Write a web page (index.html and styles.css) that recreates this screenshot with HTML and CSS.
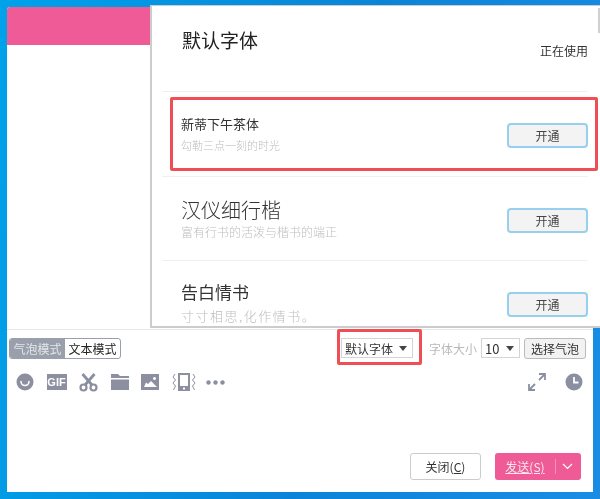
FILE: index.html
```html
<!DOCTYPE html>
<html lang="zh-CN">
<head>
    <meta charset="UTF-8">
    <title>默认字体</title>
    <link rel="stylesheet" href="styles.css">
</head>
<body>
    <div class="desktop">
        <div class="chat-window">
            <div class="chat-head"></div>
            <div class="chat-log"></div>

            <div class="format-bar">
                <div class="mode-toggle">
                    <span class="mode active">气泡模式</span>
                    <span class="mode">文本模式</span>
                </div>
                <div class="format-right">
                    <div class="dropdown font-pick">默认字体<i class="caret"></i></div>
                    <span class="size-label">字体大小</span>
                    <div class="dropdown size-pick">10<i class="caret"></i></div>
                    <button class="bubble-btn">选择气泡</button>
                </div>
            </div>

            <div class="tool-bar">
                <div class="tools-left">
                    <svg width="18" height="18" viewBox="0 0 18 18"><circle cx="9" cy="9" r="8.5" fill="#8b8fa0"/><path d="M5 8.5a4 4 0 0 0 8 0" fill="none" stroke="#fff" stroke-width="1.6" stroke-linecap="round"/></svg>
                    <span class="gif-icon">GIF</span>
                    <svg width="19" height="19" viewBox="0 0 19 19"><path d="M3.5 1l9.500 11M15.500 1l-9.500 11" stroke="#8b8fa0" stroke-width="2.800" fill="none"/><circle cx="4.500" cy="14.500" r="3" fill="none" stroke="#8b8fa0" stroke-width="2.200"/><circle cx="14.500" cy="14.500" r="3" fill="none" stroke="#8b8fa0" stroke-width="2.200"/></svg>
                    <svg width="18" height="16" viewBox="0 0 18 16"><path d="M0 0h7l2 2h9v2H0zM0 5.500h18V16H0z" fill="#8b8fa0"/></svg>
                    <svg width="18" height="16" viewBox="0 0 18 16"><path fill-rule="evenodd" d="M0 0h18v16H0zM3 13h13L10 7l-3 3-2-1.500zM13.500 3a1.500 1.500 0 1 0 .01 0z" fill="#8b8fa0"/></svg>
                    <svg width="24" height="18" viewBox="0 0 24 18"><path fill-rule="evenodd" d="M6 0h12v18H6zM8 2v11h8V2zM11 14.500v2h2v-2z" fill="#8b8fa0"/><path d="M3 1L1 4l2.500 3L1 10l2.500 3L1.500 17M21 1l2 3-2.500 3L23 10l-2.500 3 2 4" fill="none" stroke="#8b8fa0"/></svg>
                    <svg class="dots" width="19" height="5" viewBox="0 0 19 5"><circle cx="2.500" cy="2.500" r="2.200" fill="#8b8fa0"/><circle cx="9.500" cy="2.500" r="2.200" fill="#8b8fa0"/><circle cx="16.500" cy="2.500" r="2.200" fill="#8b8fa0"/></svg>
                </div>
                <div class="tools-right">
                    <svg width="18" height="18" viewBox="0 0 18 18"><path d="M11 1h6v6M17 1l-6 6M7 17H1v-6M1 17l6-6" fill="none" stroke="#8b8fa0" stroke-width="1.800"/></svg>
                    <svg width="18" height="18" viewBox="0 0 18 18"><circle cx="9" cy="9" r="8.500" fill="#8b8fa0"/><path d="M9 4v5.500h4.500" fill="none" stroke="#fff" stroke-width="1.800"/></svg>
                </div>
            </div>

            <div class="send-bar">
                <button class="close-btn">关闭(<u>C</u>)</button>
                <div class="send-btn">
                    <span class="send-label"><u>发送(S)</u></span>
                    <svg width="11" height="7" viewBox="0 0 11 7"><path d="M1 1l4.500 4.500L10 1" fill="none" stroke="#fff" stroke-width="1.200"/></svg>
                </div>
            </div>
        </div>

        <div class="font-panel">
            <div class="panel-head">
                <h1>默认字体</h1>
                <span class="in-use">正在使用</span>
            </div>
            <div class="font-row">
                <div>
                    <div class="font-name name-a">新蒂下午茶体</div>
                    <div class="font-desc desc-a">勾勒三点一刻的时光</div>
                </div>
                <button class="open-btn">开通</button>
            </div>
            <div class="font-row">
                <div>
                    <div class="font-name name-b">汉仪细行楷</div>
                    <div class="font-desc desc-b">富有行书的活泼与楷书的端正</div>
                </div>
                <button class="open-btn">开通</button>
            </div>
            <div class="font-row">
                <div>
                    <div class="font-name name-c">告白情书</div>
                    <div class="font-desc desc-c">寸寸相思,化作情书。</div>
                </div>
                <button class="open-btn">开通</button>
            </div>
            <div class="scroll-thumb"></div>
        </div>

        <div class="mark mark-row"></div>
        <div class="mark mark-font"></div>
    </div>
</body>
</html>
```

FILE: styles.css
```css
* {
    box-sizing: border-box;
}

body {
    margin: 0;
    font-family: "Noto Sans CJK SC", "Liberation Sans", sans-serif;
    color: #333;
}

button {
    font-family: inherit;
    padding: 0;
}

.desktop {
    position: relative;
    width: 600px;
    height: 499px;
    overflow: hidden;
    background: linear-gradient(100deg, #00a2ea 0%, #0a84d8 55%, #1a8ce4 100%);
    filter: blur(0.35px);
}

/* chat window */
.chat-window {
    position: absolute;
    left: 7px;
    top: 7px;
    width: 586px;
    height: 485px;
    display: flex;
    flex-direction: column;
    background: #fff;
    border-radius: 3px 3px 0 0;
    overflow: hidden;
}

.chat-head {
    height: 38px;
    background: #ee5b96;
}

.chat-log {
    height: 285px;
    border-bottom: 1px solid #e8e8e8;
}

.format-bar {
    display: flex;
    justify-content: space-between;
    align-items: center;
    height: 34px;
    padding: 0 7px 0 2px;
    margin-top: 1px;
}

.mode-toggle {
    display: flex;
    width: 112px;
    height: 21px;
    border: 1px solid #9aa0ab;
    border-radius: 3px;
    overflow: hidden;
    font-size: 12px;
    line-height: 19px;
}

.mode {
    flex: 1;
    text-align: center;
    color: #222;
}

.mode.active {
    background: #9aa0ab;
    color: #e4e6ea;
}

.format-right {
    display: flex;
    align-items: center;
}

.dropdown {
    display: flex;
    align-items: center;
    justify-content: space-between;
    height: 20px;
    padding: 0 5px 0 3px;
    border: 1px solid #d4d4d4;
    font-size: 12px;
    color: #333;
}

.font-pick {
    width: 72px;
}

.size-pick {
    width: 39px;
    margin-right: 4px;
    font-size: 13px;
}

.caret {
    width: 0;
    height: 0;
    border-left: 4.5px solid transparent;
    border-right: 4.5px solid transparent;
    border-top: 5px solid #444;
}

.size-label {
    margin: 0 4px 0 16px;
    font-size: 12px;
    color: #b9b9b9;
}

.bubble-btn {
    width: 62px;
    height: 21px;
    border: 1px solid #bbb;
    border-radius: 3px;
    background: #f2f2f2;
    font-size: 12px;
    color: #333;
}

.tool-bar {
    display: flex;
    justify-content: space-between;
    align-items: center;
    height: 34px;
    padding: 0 10px 0 9px;
}

.tools-left {
    display: flex;
    align-items: center;
    gap: 12.5px;
}

.tools-right {
    display: flex;
    align-items: center;
    gap: 19px;
}

.gif-icon {
    width: 20px;
    height: 16px;
    background: #8b8fa0;
    color: #fff;
    font-family: "Liberation Sans", sans-serif;
    font-size: 11px;
    font-weight: bold;
    line-height: 16px;
    text-align: center;
}

.dots {
    margin-left: -2px;
}

.send-bar {
    display: flex;
    justify-content: flex-end;
    gap: 14px;
    padding-right: 12px;
    margin-top: 54px;
}

.close-btn {
    width: 71px;
    height: 27px;
    border: 1px solid #ccc;
    border-radius: 3px;
    background: #fff;
    font-size: 12px;
    color: #333;
}

.send-btn {
    display: flex;
    align-items: center;
    width: 86px;
    height: 27px;
    border-radius: 3px;
    background: #ee5b96;
    color: #fde6ef;
    font-size: 12px;
}

.send-label {
    width: 61px;
    height: 15px;
    line-height: 15px;
    text-align: center;
    border-right: 1px solid #f48fb8;
    margin-right: 6px;
}

/* font list, sits over the chat window */
.font-panel {
    position: absolute;
    left: 150px;
    top: 5px;
    width: 450px;
    height: 323px;
    background: #fff;
    border-left: 2px solid #ccc;
    border-top: 1px solid #ccc;
    border-bottom: 2px solid #ccc;
    overflow: hidden;
    padding: 0 12px 0 10px;
}

.panel-head {
    display: flex;
    justify-content: space-between;
    height: 86px;
    padding: 0 0 0 20px;
    border-bottom: 1px solid #f0f0f0;
}

.panel-head h1 {
    margin: 21px 0 0;
    font-size: 19px;
    font-weight: 400;
    line-height: 26px;
    color: #222;
}

.in-use {
    margin-top: 36px;
    font-size: 12px;
    line-height: 18px;
    color: #333;
}

.font-row {
    display: flex;
    justify-content: space-between;
    align-items: center;
    height: 84.5px;
    padding-left: 19px;
    border-bottom: 1px solid #f0f0f0;
}

.font-name {
    color: #333;
}

.font-desc {
    font-weight: 300;
    color: #bdbdbd;
}

.name-a {
    font-size: 13px;
    line-height: 18px;
}

.desc-a {
    margin-top: 5px;
    font-size: 11px;
    line-height: 15px;
}

.name-b {
    font-size: 20px;
    font-weight: 300;
    line-height: 28px;
}

.desc-b {
    font-size: 12px;
    line-height: 16px;
}

.name-c {
    font-size: 17px;
    line-height: 24px;
}

.desc-c {
    margin-top: 3px;
    font-size: 13px;
    letter-spacing: 1.5px;
    line-height: 18px;
}

.open-btn {
    width: 81px;
    height: 25px;
    margin-top: 4px;
    border: 2px solid #97d0ec;
    border-radius: 4px;
    background: #f3f3f3;
    font-size: 12px;
    color: #444;
}

.scroll-thumb {
    position: absolute;
    right: 0;
    top: 2px;
    width: 2px;
    height: 25px;
    background: #d0d0d0;
}

/* red annotation boxes */
.mark {
    position: absolute;
    border: 3px solid #ee4f54;
    border-radius: 2px;
}

.mark-row {
    left: 170px;
    top: 97px;
    width: 428px;
    height: 74px;
}

.mark-font {
    left: 337px;
    top: 329px;
    width: 85px;
    height: 36px;
}
```
